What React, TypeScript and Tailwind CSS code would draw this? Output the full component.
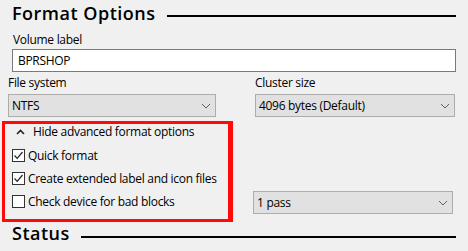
import React from 'react';

const FONT = { fontFamily: '"Open Sans", "Noto Sans", sans-serif' };

const Chevron = () => (
  <svg width="10" height="6" viewBox="0 0 10 6" className="shrink-0">
    <path d="M1 1 L5 5 L9 1" fill="none" stroke="#606060" strokeWidth="1" />
  </svg>
);

const Select = ({ value, className = '' }: { value: string; className?: string }) => (
  <div className={`h-[23px] flex items-center justify-between bg-[#e1e1e1] border border-[#adadad] pl-[3px] pr-[4px] text-[12px] tracking-[-0.3px] text-black ${className}`}>
    <span className="leading-[16px]">{value}</span>
    <Chevron />
  </div>
);

const Checkbox = ({ checked, label }: { checked: boolean; label: string }) => (
  <div className="h-[23px] flex items-center">
    <div className="w-[13px] h-[13px] ml-[7px] bg-white border border-[#333333] flex items-center justify-center">
      {checked && (
        <svg width="11" height="11" viewBox="0 0 11 11">
          <path d="M1.5 5.5 L4.2 8.3 L9.5 2" fill="none" stroke="#202020" strokeWidth="1.2" />
        </svg>
      )}
    </div>
    <span className="ml-[3px] text-[12px] tracking-[-0.3px] leading-[16px] text-black">{label}</span>
  </div>
);

export default function App() {
  return (
    <div className="w-[468px] h-[251px] bg-[#f0f0f0] overflow-hidden" style={FONT}>
      {/* Format Options header */}
      <div className="mt-[1px] h-[24px] flex items-start pl-[12px] pr-[12px]">
        <span className="text-[18px] tracking-[0.5px] leading-[24px] font-semibold text-black">Format Options</span>
        <div className="flex-1 h-[2px] bg-black mt-[14px] ml-[12px]" />
      </div>

      {/* Volume label */}
      <div className="pl-[12px] pr-[12px]">
        <div className="mt-[7px] text-[12px] tracking-[-0.3px] leading-[16px] text-black pl-[1px]">Volume label</div>
        <div className="mt-[1px] h-[23px] bg-white border border-[#7a7a7a] flex items-center pl-[5px] text-[12px] tracking-[-0.3px] text-black">
          <span className="leading-[16px]">BPRSHOP</span>
        </div>
      </div>

      {/* File system / Cluster size */}
      <div className="flex">
        <div className="ml-[8px] w-[208px]">
          <div className="mt-[3px] text-[12px] tracking-[-0.3px] leading-[16px] text-black">File system</div>
          <Select value="NTFS" className="mt-[3px]" />
        </div>
        <div className="ml-[39px] w-[200px]">
          <div className="mt-[3px] text-[12px] tracking-[-0.3px] leading-[16px] text-black">Cluster size</div>
          <Select value="4096 bytes (Default)" className="mt-[3px]" />
        </div>
      </div>

      {/* Advanced options */}
      <div className="mt-[4px] flex items-end">
        <div className="ml-[2px] w-[231px] border-[3px] border-r-[5px] border-[#ff0a0a] pb-[6px]">
          <div className="h-[16px] flex items-center">
            <svg width="9" height="6" viewBox="0 0 9 6" className="ml-[11px]">
              <path d="M1 5 L4.5 1.5 L8 5" fill="none" stroke="#222" strokeWidth="1.6" />
            </svg>
            <span className="ml-[8px] text-[12px] tracking-[-0.3px] leading-[16px] text-black">Hide advanced format options</span>
          </div>
          <div className="mt-[4px]">
            <Checkbox checked label="Quick format" />
            <Checkbox checked label="Create extended label and icon files" />
            <Checkbox checked={false} label="Check device for bad blocks" />
          </div>
        </div>
        <div className="ml-[20px] w-[200px] mb-[8px]">
          <Select value="1 pass" />
        </div>
      </div>

      {/* Status header */}
      <div className="mt-[1px] h-[20px] flex items-start pl-[12px] pr-[12px]">
        <span className="text-[18px] tracking-[0.5px] leading-[20px] font-semibold text-black">Status</span>
        <div className="flex-1 h-[2px] bg-black mt-[13px] ml-[11px]" />
      </div>
    </div>
  );
}
